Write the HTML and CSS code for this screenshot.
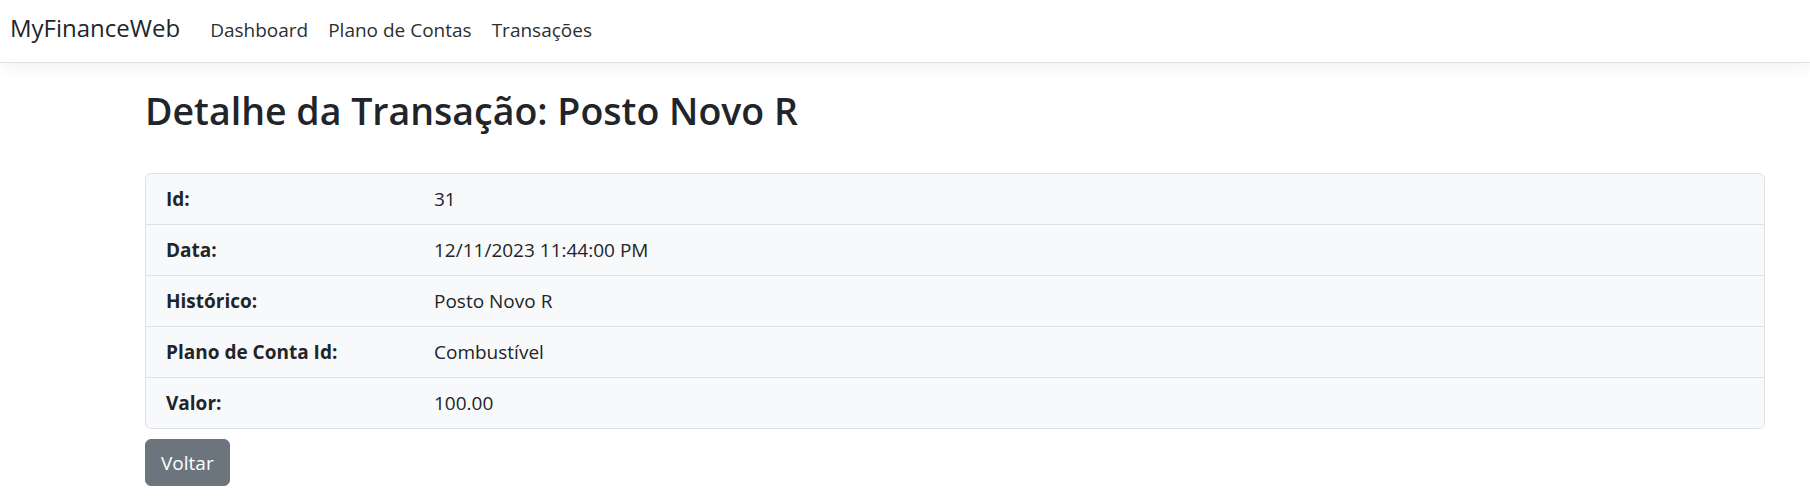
FILE: index.html
```html
<!DOCTYPE html>
<html lang="pt-BR">
<head>
<meta charset="utf-8">
<title>Detalhe da Transação - MyFinanceWeb</title>
<link rel="stylesheet" href="styles.css">
</head>
<body>
<header class="navbar">
  <a class="brand" href="#">MyFinanceWeb</a>
  <nav class="nav">
    <a class="nav-link" href="#">Dashboard</a>
    <a class="nav-link" href="#">Plano de Contas</a>
    <a class="nav-link" href="#">Transações</a>
  </nav>
</header>
<main class="container">
  <h1 class="title">Detalhe da Transação: Posto Novo R</h1>
  <div class="details">
    <div class="row"><div class="label">Id:</div><div class="value">31</div></div>
    <div class="row"><div class="label">Data:</div><div class="value">12/11/2023 11:44:00 PM</div></div>
    <div class="row"><div class="label">Histórico:</div><div class="value">Posto Novo R</div></div>
    <div class="row"><div class="label">Plano de Conta Id:</div><div class="value">Combustível</div></div>
    <div class="row"><div class="label">Valor:</div><div class="value">100.00</div></div>
  </div>
  <a class="btn" href="#">Voltar</a>
</main>
</body>
</html>
```
FILE: styles.css
```css
* { box-sizing: border-box; }
html, body { margin: 0; padding: 0; }
body {
  font-family: "Open Sans", "Noto Sans", "Liberation Sans", sans-serif;
  color: #212529;
  background: #fff;
  font-size: 19px;
}
a { text-decoration: none; color: inherit; }

.navbar {
  display: flex;
  align-items: baseline;
  height: 63px;
  padding: 9px 0 0 10px;
  border-bottom: 1px solid #dee2e6;
  box-shadow: 0 5px 15px rgba(0, 0, 0, 0.05);
}
.brand {
  font-size: 24px;
  line-height: 37.5px;
  color: #212529;
  margin-right: 20px;
}
.nav { display: flex; align-items: baseline; }
.nav-link {
  font-size: 19px;
  line-height: 30px;
  padding: 0 10px;
  color: #2b2f33;
}

.container {
  width: 1620px;
  margin: 0 0 0 145px;
}
.title {
  font-size: 37.5px;
  font-weight: 600;
  line-height: 48px;
  margin: 24px 0 38px;
}
.details {
  background: #f8f9fa;
  border: 1px solid #dee2e6;
  border-radius: 6px;
}
.row {
  display: flex;
  border-top: 1px solid #dee2e6;
}
.row:first-child { border-top: none; }
.label {
  width: 288px;
  padding: 10px 20px;
  font-weight: 700;
  line-height: 30px;
}
.value {
  flex: 1;
  padding: 10px 0;
  line-height: 30px;
}
.btn {
  display: inline-block;
  margin-top: 10px;
  padding: 7.5px 15px;
  font-size: 19px;
  line-height: 30px;
  color: #fff;
  background: #6c757d;
  border: 1px solid #6c757d;
  border-radius: 6px;
}
```
